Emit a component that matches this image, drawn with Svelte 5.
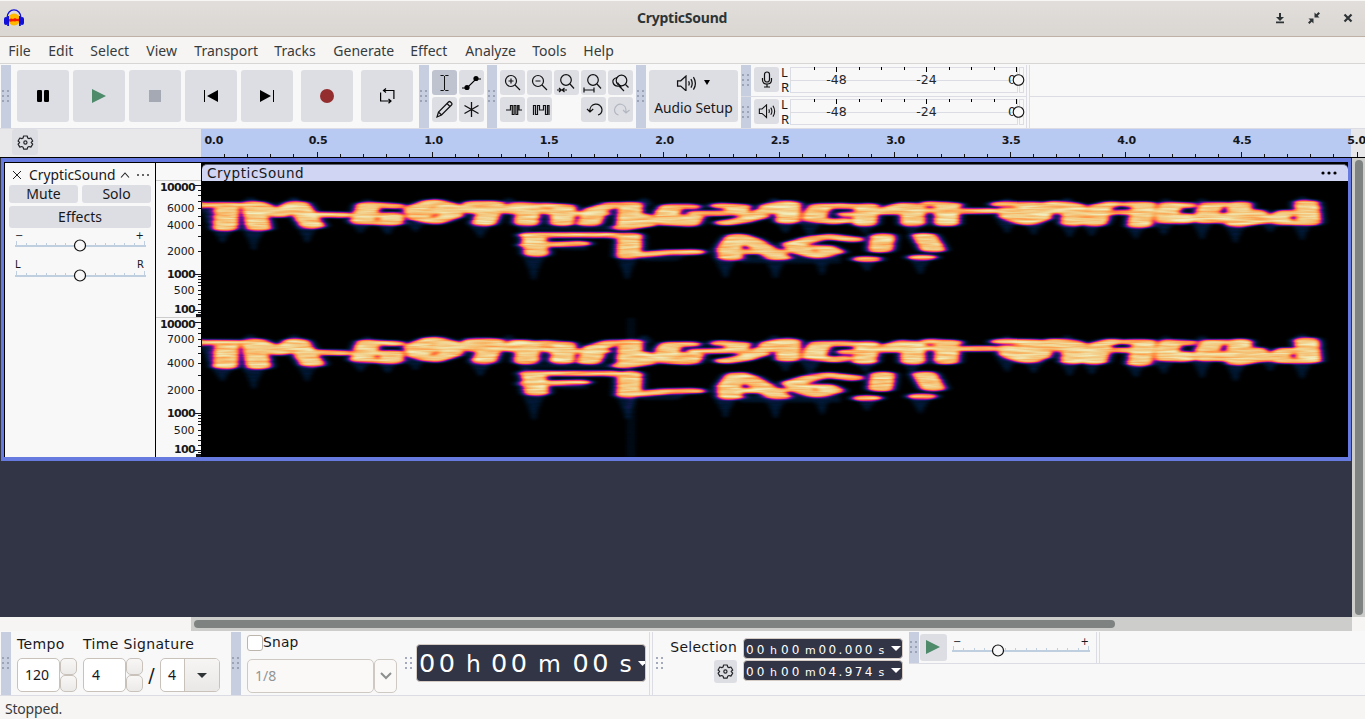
<script>
  const menus = [
    ['File', 8], ['Edit', 48], ['Select', 90], ['View', 146], ['Transport', 194], ['Tracks', 274],
    ['Generate', 333], ['Effect', 410], ['Analyze', 465], ['Tools', 532], ['Help', 583]
  ];
  const menuItems = menus.map(([name, x], i) => ({ name, w: (menus[i + 1]?.[1] ?? x + 60) - x }));

  const ticks = Array.from({ length: 50 }, (_, i) => i + 1);
  const seconds = ['0.5', '1.0', '1.5', '2.0', '2.5', '3.0', '3.5', '4.0', '4.5', '5.0'];

  const freq = [
    { t: '10000', y: 187, b: 1 }, { t: '6000', y: 208 }, { t: '4000', y: 225 }, { t: '2000', y: 251 },
    { t: '1000', y: 274, b: 1 }, { t: '500', y: 290 }, { t: '100', y: 309, b: 1 },
    { t: '10000', y: 324, b: 1 }, { t: '7000', y: 339 }, { t: '4000', y: 363 }, { t: '2000', y: 390 },
    { t: '1000', y: 413, b: 1 }, { t: '500', y: 430 }, { t: '100', y: 449, b: 1 }
  ];
  const longTicks = [185, 274, 310, 322, 413, 450];
  const shortTicks = [
    190, 195, 201, 208, 216, 225, 236, 251, 276, 279, 282, 285, 290, 294, 299, 304, 312, 314,
    328, 333, 339, 346, 353, 363, 375, 390, 415, 418, 421, 424, 430, 435, 440, 445, 452, 454
  ];

  // Energy ridges of the signal: x,y pairs in thirds of a pixel.
  const ridges = [
    [-40, 75, 110, 75], [80, 77, 74, 145],
    [158, 72, 175, 145], [165, 72, 235, 102, 285, 72], [175, 80, 235, 104, 290, 82], [290, 72, 336, 138], [320, 103, 425, 105],
    [578, 78, 505, 74, 485, 125, 572, 129, 575, 105, 495, 107],
    [700, 66, 755, 80, 750, 108, 700, 124, 655, 113, 645, 85, 700, 66], [665, 103, 742, 82],
    [870, 70, 825, 70, 805, 92, 855, 96], [878, 72, 850, 130],
    [920, 92, 960, 74, 985, 76, 977, 130], [920, 93, 975, 97],
    [1030, 76, 1090, 80, 1085, 130], [1015, 90, 1080, 100],
    [1165, 131, 1185, 90, 1235, 75, 1275, 75], [1110, 100, 1195, 100],
    [1290, 73, 1285, 138], [1270, 142, 1330, 133, 1355, 118, 1315, 108],
    [1465, 80, 1415, 80, 1400, 98, 1395, 128, 1460, 132, 1474, 112, 1410, 109], [1495, 100, 1570, 99],
    [1565, 77, 1615, 80, 1605, 97, 1672, 108, 1620, 122, 1578, 128],
    [1705, 95, 1715, 78, 1760, 70], [1765, 72, 1762, 123], [1690, 95, 1765, 95],
    [1930, 78, 1862, 78, 1845, 100, 1840, 118, 1900, 125, 1925, 122], [1920, 78, 1990, 80], [1945, 103, 1990, 103],
    [2000, 78, 1992, 131], [2060, 90, 2110, 76, 2140, 80], [2137, 77, 2137, 131], [2030, 97, 2130, 96],
    [2240, 75, 2238, 131], [2195, 72, 2250, 75], [2160, 91, 2240, 92], [2260, 93, 2370, 93],
    [2405, 72, 2500, 73], [2425, 90, 2435, 112, 2480, 127, 2515, 115, 2520, 90, 2470, 77], [2450, 105, 2505, 85], [2440, 100, 2510, 112],
    [2562, 71, 2610, 75, 2622, 90], [2545, 78, 2562, 93, 2620, 97], [2625, 80, 2617, 130],
    [2682, 131, 2700, 80, 2735, 72], [2655, 98, 2720, 98],
    [2790, 73, 2832, 73, 2817, 136], [2770, 97, 2830, 97],
    [2955, 76, 2912, 74, 2900, 95, 2900, 122, 2945, 124, 2950, 108],
    [3070, 74, 3035, 74, 3022, 95, 3017, 122, 3070, 122, 3075, 106],
    [3118, 72, 3112, 131], [3115, 98, 3160, 96, 3175, 110, 3160, 125, 3115, 133],
    [3318, 68, 3325, 128], [3300, 98, 3260, 98, 3225, 114, 3255, 128, 3320, 128], [3165, 124, 3240, 120],
    [1000, 167, 1008, 222], [990, 165, 1220, 165, 1262, 168], [990, 195, 1134, 191],
    [1288, 166, 1285, 226], [1283, 228, 1400, 217, 1478, 216],
    [1612, 170, 1585, 205, 1590, 234], [1615, 170, 1645, 180, 1700, 212, 1735, 233], [1600, 215, 1735, 215],
    [1955, 178, 1885, 170, 1840, 176, 1780, 193, 1800, 213, 1850, 227, 1895, 215, 1870, 203, 1815, 203],
    [2047, 168, 2040, 210], [1992, 237, 2008, 237],
    [2172, 167, 2198, 209], [2158, 232, 2172, 232]
  ];
  // Faint leakage below the loudest columns: x, y, length.
  const tails = [
    [66, 148, 40], [160, 148, 62], [320, 138, 50], [480, 130, 30], [562, 130, 34], [645, 125, 30], [840, 135, 38],
    [976, 132, 32], [1000, 225, 75], [1280, 228, 70], [1575, 238, 55], [1725, 235, 60], [1755, 125, 34], [1865, 225, 60],
    [1830, 125, 50], [1995, 135, 26], [2000, 240, 34], [2135, 132, 34], [2160, 236, 46], [2420, 120, 40], [2500, 128, 36],
    [2608, 130, 42], [2674, 130, 38], [2806, 136, 40], [2890, 126, 40], [3005, 122, 56], [3105, 132, 56], [3210, 125, 32],
    [3305, 128, 52], [25, 70, 60]
  ];
  const peaks = [[-5, 70], [150, 60], [280, 60], [500, 66], [925, 62], [1330, 62], [1720, 62], [2420, 64], [2600, 62], [2895, 64], [3005, 64], [3305, 58]];

  const toPoints = (r) => {
    let s = '';
    for (let i = 0; i < r.length; i += 2) s += `${r[i] / 5.6},${r[i + 1]} `;
    return s;
  };
  const lines = ridges.map(toPoints);
  const channels = [
    { k: 'a', m: 'translate(-1.5 -1) scale(.33333)' },
    { k: 'b', m: 'translate(-1.5 135.9) scale(.33333 .3425)' }
  ];
  const meterTicks = Array.from({ length: 10 }, (_, i) => 24 + i * 22.45);
</script>

{#snippet grip(plain, h)}
  <div class="grip" class:plain style:height="{h}px">
    <svg width="8" height="14" viewBox="0 0 8 14" shape-rendering="crispEdges">
      {#each [0, 5, 10] as y}<rect x="0" {y} width="2" height="2" /><rect x="5" {y} width="2" height="2" />{/each}
    </svg>
  </div>
{/snippet}

{#snippet gear()}
  <svg width="17" height="17" viewBox="0 0 17 17" fill="none" stroke="#25262b" stroke-width="1.2" stroke-linejoin="round">
    <path d="M6.600 2h3.600l.5 2 1.300.6 1.900-.6 1.800 3-1.500 1.500 1.500 1.600-1.800 3-1.900-.6-1.300.7-.5 1.900H6.600l-.5-1.900-1.300-.7-2 .6-1.700-3 1.500-1.600L1.100 7l1.700-3 2 .6 1.300-.6z" />
    <circle cx="8.400" cy="8.500" r="1.600" />
  </svg>
{/snippet}

{#snippet speaker(w)}
  <svg width={w} height={w * 0.8} viewBox="0 0 20 16" fill="none" stroke="#111" stroke-width="1.200">
    <path d="M1.500 5.500h3L9.500 1v14L4.500 10.500h-3z" /><path d="M12 6q1.200 2 0 4M14.200 4q2.500 4 0 8M16.600 2q3.800 6 0 12" />
  </svg>
{/snippet}

{#snippet slider(w, pos)}
  <svg class="slider" width={w} height="16" viewBox="0 0 {w} 16">
    <g fill="#c0cfdf" shape-rendering="crispEdges">
      <rect x="0" y="8" width={w} height="2" />
      {#each Array(14) as _, i}<rect x={1 + Math.round((i * (w - 3)) / 13)} y={i === 0 || i === 13 ? 4 : 6} width="1" height="4" />{/each}
    </g>
    <circle cx={pos} cy="8.500" r="5.500" fill="#f8f8f8" stroke="#111" stroke-width="1.200" />
  </svg>
{/snippet}

<main>
  <header>
    <svg class="logo" width="20" height="18" viewBox="0 0 20 18">
      <circle cx="10" cy="10.500" r="6" fill="#ffb800" /><path d="M4.500 10.500 7 9.500l2 .5 2-1 2 1 2.500-.5v3L13 12l-2 .6-2-.4-2.500.6-2-.5z" fill="#f21a00" />
      <path d="M3 9C3-1.800 17-1.800 17 9" fill="none" stroke="#1010d8" stroke-width="1.300" />
      <rect x="0" y="8" width="4" height="8" rx="2" fill="#1010d8" /><rect x="3.200" y="7" width="1.800" height="10" fill="#1010d8" />
      <rect x="16" y="8" width="4" height="8" rx="2" fill="#1010d8" /><rect x="15" y="7" width="1.800" height="10" fill="#1010d8" />
    </svg>
    <h1>CrypticSound</h1>
    <div class="wm">
      <svg width="10" height="12" viewBox="0 0 10 12"><path d="M4 1h2v4h3L5 9 1 5h3zM1 9.500h8v1.800H1z" fill="#2e3436" /></svg>
      <svg width="14" height="14" viewBox="0 0 14 14"><path d="M7.500 6.500V1.500L9.300 3.300 11.500 1 13 2.500 10.700 4.700 12.500 6.500zM6.500 7.500v5L4.700 10.700 2.500 13 1 11.500 3.300 9.300 1.500 7.500z" fill="#2e3436" /></svg>
      <svg width="10" height="10" viewBox="0 0 10 10"><path d="m1.500 1.500 7 7m0-7-7 7" stroke="#2e3436" stroke-width="2.200" /></svg>
    </div>
  </header>

  <nav>{#each menuItems as m}<span style:width="{m.w}px">{m.name}</span>{/each}</nav>

  <section class="dock top">
    {@render grip(false, 63)}
    <div class="transport">
      <button><svg width="12" height="12"><rect width="5" height="12" rx="1.200" /><rect x="7" width="5" height="12" rx="1.200" /></svg></button>
      <button><svg width="14" height="14"><path d="M0 0v14L14 7z" fill="#4d8b6b" /></svg></button>
      <button><svg width="12" height="12"><rect width="12" height="12" fill="#a5a9b3" /></svg></button>
      <button><svg width="14" height="12"><path d="M0 0h1v12H0zM14 0v12L3 6z" /></svg></button>
      <button><svg width="14" height="12"><path d="M13 0h1v12h-1zM0 0v12l11-6z" /></svg></button>
      <button class="sp"><svg width="14" height="14"><circle cx="7" cy="7" r="7" fill="#942e2e" /></svg></button>
      <button class="sp"><svg width="15" height="16" viewBox="0 0 15 16" fill="none" stroke="#000" stroke-width="1.200"><path d="M3.500 2.500h10.400v8.500M6 .5l-2.500 2L6 4.500M11 13H.600V4.500M8.500 11l2.500 2-2.500 2.300" /></svg></button>
    </div>
    {@render grip(false, 63)}
    <div class="grid two">
      <button class="on"><svg width="25" height="25" fill="none" stroke="#111"><path d="M8.500 5.500h3l1 1 1-1h3M12.500 6v14M8.500 20.500h3l1-1 1 1h3" /></svg></button>
      <button><svg width="25" height="25"><path d="M3 18h5L17 9h5" fill="none" stroke="#000" stroke-width="1.200" /><circle cx="8" cy="17.500" r="2.600" /><circle cx="17" cy="8.500" r="2.600" /></svg></button>
      <button><svg width="25" height="25" fill="none" stroke="#111" stroke-width="1.200"><path d="m5 20 1.500-5L16.500 5q1-1 2 0l1 1q1 1 0 2L9.500 18zM15 6.500l3 3M6.500 15l3 3" /></svg></button>
      <button><svg width="25" height="25" stroke="#111" stroke-width="1.300"><path d="M12.500 5v15M5.500 8.500l14 8M19.500 8.500l-14 8" /></svg></button>
    </div>
    {@render grip(false, 63)}
    <div class="grid five">
      {#each ['in', 'out', 'sel', 'fit', 'tog'] as z}
        <button><svg width="25" height="25" fill="none" stroke="#111" stroke-width="1.200">
          {#if z === 'in' || z === 'out'}
            <circle cx="11" cy="11" r="5.500" /><path d="m15 15 5 5M8.500 11h5" />{#if z === 'in'}<path d="M11 8.500v5" />{/if}
          {:else if z === 'tog'}
            <circle cx="13.500" cy="10.500" r="5.300" /><path d="m17.500 14.500 3 3M9 7.500Q4 9 5 12.500q1 4 6 3.500l5 5M9.500 12.500l4 5" />
          {:else}
            <circle cx="12" cy="10" r="5.300" /><path d="m16 14 4 4.500" />
            {#if z === 'sel'}<path d="M3 20h4M8 20h5M5 18l2.300 2L5 22M10.500 18l-2.300 2 2.300 2" />{:else}<path d="M3 20h10M3 17.500v5M13 17.500v5" />{/if}
          {/if}
        </svg></button>
      {/each}
      <button><svg width="25" height="25" fill="none" stroke="#111" stroke-width="1.200"><path d="M6 13h4.500V8.500h1.800v9h1.800v-9h1.800v9h1.800v-9h1.300V13h3" /></svg></button>
      <button><svg width="25" height="25" fill="none" stroke="#111" stroke-width="1.200"><path d="M6.500 18V8.500h2v9h2v-9h2V13h4V8.500h2v9h2v-9h1.500V18" /></svg></button>
      <i></i>
      <button><svg width="25" height="25" fill="none" stroke="#111" stroke-width="1.200"><path d="M9 14.500c-1-9 11-10 12-2 0 3-2 5-4 5.500M6 12l3 3 3.200-3" /></svg></button>
      <button><svg width="25" height="25" fill="none" stroke="#b3b7c0" stroke-width="1.200"><path d="M18 15.500c1-10-10-11-11.500-3 0 3 2 5 4 5.500M15 13l3 3 3.500-3" /></svg></button>
    </div>
    {@render grip(false, 63)}
    <button class="audio">
      <span>{@render speaker(21)}<svg width="6" height="5"><path d="M0 0h6L3 5z" /></svg></span>
      Audio Setup
    </button>
    <div class="meters">
      {#each [0, 1] as row}
        <div class="mrow">
          {@render grip(false, 31)}
          <button>
            {#if row === 0}<svg width="16" height="17" fill="none" stroke="#111" stroke-width="1.200"><rect x="5.500" y="1" width="5" height="10" rx="2.500" /><path d="M3.500 7v2q0 4 4.500 4t4.500-4V7M8 13v3M5 16h6" /></svg>
            {:else}{@render speaker(18)}{/if}
          </button>
          <div class="lr"><span>L</span><span>R</span></div>
          <svg width="235" height="27" font-family="DejaVu Sans" font-size="12.500" fill="#25272b">
            <g fill="none" stroke="#dcdde4" shape-rendering="crispEdges"><path d="M.5.5h227v25H.5zM.5 13h227M229.500.5h4v25h-4z" /></g>
            {#each meterTicks as x, i}<rect x={Math.round(x)} y="0" width="1" height={i % 4 === 1 || i === 9 ? 5 : 3} fill="#000" />{/each}
            <text x="46.500" y="16.500" text-anchor="middle">-48</text><text x="136.500" y="16.500" text-anchor="middle">-24</text><text x="222" y="16.500" text-anchor="middle">0</text>
            <circle cx="228.500" cy="13" r="5.300" fill="#f8f8f8" stroke="#111" stroke-width="1.100" />
          </svg>
        </div>
      {/each}
    </div>
    <div class="rest"><i></i><i></i></div>
  </section>

  <section class="ruler">
    <div class="gearbox"><button>{@render gear()}</button></div>
    <svg width="1164" height="28" font-family="DejaVu Sans" font-weight="bold" font-size="11" fill="#15161a">
      <rect width="1150" height="28" fill="#b8c9f2" />
      <text x="3.500" y="15" letter-spacing="-.3">0.0</text>
      {#each ticks as n}<rect x={Math.round(n * 23.11)} y={n % 5 ? 25 : 23} width="1" height="5" />{/each}
      {#each seconds as s, i}<text x={(i + 1) * 115.5 + (i === 9 ? 0.5 : 1.5)} y="15" text-anchor="middle" letter-spacing="-.3">{s}</text>{/each}
    </svg>
  </section>

  <section class="project">
    <div class="tracks">
      <article>
        <div class="panel">
          <div class="name">
            <svg width="10" height="10"><path d="m1 1 8 8m0-8-8 8" stroke="#222" /></svg><b>CrypticSound</b>
            <svg width="10" height="6"><path d="m1 5.500 4-4.500 4 4.500" fill="none" stroke="#222" stroke-width="1.100" /></svg>
            <svg width="12" height="2"><path d="M0 0h2v2H0zM5 0h2v2H5zM10 0h2v2h-2z" fill="#666" /></svg>
          </div>
          <div class="ms"><button>Mute</button><button>Solo</button></div>
          <button class="fx">Effects</button>
          <div class="ends"><span>−</span><span>+</span></div>
          {@render slider(131, 65)}
          <div class="ends lo"><span>L</span><span>R</span></div>
          {@render slider(131, 65)}
        </div>
        <svg class="vruler" width="45" height="294" viewBox="156 163 45 294" font-family="DejaVu Sans" font-size="11" fill="#17181c">
          <path d="M156 180.500h45M156 317.500h45" stroke="#ccc" />
          {#each freq as f}<text x={f.b ? 195 : 194.500} y={f.y + 4} text-anchor="end" font-weight={f.b ? 'bold' : 'normal'} letter-spacing={f.b ? -0.65 : -0.1}>{f.t}</text>{/each}
          {#each longTicks as y}<rect x="195" {y} width="6" height="1" />{/each}
          {#each shortTicks as y}<rect x="198" {y} width="3" height="1" />{/each}
          <path d="M196 314h5v3h-5zM196 454h5v3h-5z" />
        </svg>
        <div class="clip">
          <div class="cliphead"><span>CrypticSound</span><svg width="16" height="4"><circle cx="2" cy="2" r="1.600" /><circle cx="8" cy="2" r="1.600" /><circle cx="14" cy="2" r="1.600" /></svg></div>
          <svg class="spectrum" width="1146" height="276" viewBox="0 0 1146 276">
            <defs>
              <filter id="heat" filterUnits="userSpaceOnUse" x="0" y="0" width="1146" height="276" color-interpolation-filters="sRGB">
                <feGaussianBlur in="SourceGraphic" stdDeviation="2.4 .85" result="e" />
                <feTurbulence type="fractalNoise" baseFrequency=".03 .4" numOctaves="2" seed="7" />
                <feColorMatrix values=".5 0 0 0 .62  .5 0 0 0 .62  .5 0 0 0 .62  0 0 0 0 1" result="n" />
                <feComposite in="e" in2="n" operator="arithmetic" k1="1" />
                <feComponentTransfer>
                  <feFuncR type="table" tableValues="0 0 .14 .42 .72 .94 1 1 .97 .95 .95" />
                  <feFuncG type="table" tableValues="0 .09 .11 .06 .09 .25 .46 .6 .73 .83 .93" />
                  <feFuncB type="table" tableValues="0 .19 .42 .58 .58 .42 .25 .29 .42 .57 .75" />
                </feComponentTransfer>
              </filter>
              <g id="signal">
                <g fill="#fff" opacity=".12">
                  {#each tails as [x, y, l]}<path d="M{x - 34} {y}h68l-22 {l * 0.6}-8 {l * 0.4}h-8l-10-{l * 0.4}z" />{/each}
                  {#each peaks as [x, y]}<path d="M{x - 32} {y + 12}l24-20h16l24 20z" />{/each}
                  <path d="M955 150h320v-12h-300zM1320 226h140l-30 16h-110zM1600 228h320v22h-300zM1050 200h110v10h-80z" opacity=".8" />
                </g>
                <g transform="scale(5.6 1)" fill="none" stroke="#fff" stroke-linecap="round" stroke-linejoin="round">
                  <g stroke-width="19" opacity=".17">{#each lines as p}<polyline points={p} />{/each}</g>
                  <g stroke-width="12.900">{#each lines as p}<polyline points={p} />{/each}</g>
                </g>
              </g>
            </defs>
            <g filter="url(#heat)">
              <rect width="1146" height="276" />
              <rect x="425" y="137" width="8" height="139" fill="#0f0f0f" />
              {#each channels as c (c.k)}<use href="#signal" transform={c.m} />{/each}
            </g>
          </svg>
        </div>
      </article>
    </div>
    <div class="vscroll"><i></i></div>
  </section>

  <section class="hscroll"><div><i></i></div></section>

  <section class="dock bottom">
    {@render grip(false, 63)}
    <div class="tempo">
      <div class="labels"><span>Tempo</span><span>Time Signature</span></div>
      <div class="fields">
        <div class="field">120</div><div class="spin"><i></i><i></i></div>
        <div class="field second">4</div><div class="spin"><i></i><i></i></div>
        <span class="slash">/</span>
        <div class="combo"><span>4</span><i><svg width="10" height="5"><path d="M0 0h10L5 5z" fill="#2e3436" /></svg></i></div>
      </div>
    </div>
    {@render grip(false, 63)}
    <div class="snap">
      <div class="check"><i></i>Snap</div>
      <div class="off"><span>1/8</span><i><svg width="12" height="8"><path d="m1 1 5 5 5-5" fill="none" stroke="#8b8f8e" stroke-width="2" /></svg></i></div>
    </div>
    {@render grip(true, 63)}
    <div class="clock">
      <span>00</span><small>h</small><span>00</span><small>m</small><span>00</span><small>s</small>
      <svg width="7" height="5"><path d="M0 0h9L4.500 5z" fill="#fff" /></svg>
    </div>
    <div class="seam"></div>
    {@render grip(true, 63)}
    <div class="sellabel"><span>Selection</span><button>{@render gear()}</button></div>
    <div class="times">
      {#each ['00.000', '04.974'] as t}
        <div><span>00</span><small>h</small><span>00</span><small>m</small><span>{t}</span><small>s</small><svg width="10" height="5"><path d="M0 0h10L5 5z" fill="#fff" /></svg></div>
      {/each}
    </div>
    <div class="speed">
      {@render grip(false, 31)}
      <button><svg width="14" height="14"><path d="M0 0v14L14 7z" fill="#4d8b6b" /></svg></button>
      <div class="spslide"><div class="ends"><span>−</span><span>+</span></div>{@render slider(138, 46)}</div>
      <div class="seam last"></div>
    </div>
  </section>

  <footer>Stopped.</footer>
</main>

<style>
  :global(body) { margin: 0; overflow: hidden; }
  main { width: 1365px; height: 719px; display: flex; flex-direction: column; overflow: hidden; background: #f6f5f3; font-family: 'Noto Sans', sans-serif; color: #17181c; }
  main :global(*) { box-sizing: border-box; }
  svg { display: block; flex: none; }
  button { border: 0; padding: 0; margin: 0; background: #dddee4; border-radius: 3px; display: flex; align-items: center; justify-content: center; font: inherit; color: inherit; }

  header { height: 37px; flex: none; display: flex; align-items: center; background: linear-gradient(#e1dedb, #dad6d2); border-top: 1px solid #f7f6f5; border-bottom: 1px solid #beb2a7; padding: 0 12px 2px 4px; }
  .logo { margin-right: 613px; }
  h1 { margin: 0; font-size: 14px; line-height: 20px; font-weight: 700; color: #2e3436; width: 91px; letter-spacing: -.25px; white-space: nowrap; }
  .wm { margin-left: auto; display: flex; align-items: center; gap: 21.500px; }
  .wm svg:nth-child(2) { margin-right: 1px; }

  nav { height: 27px; flex: none; display: flex; padding-left: 8.300px; border-bottom: 1px solid #d8d6d4; font-size: 14px; line-height: 27px; color: #363c3e; }
  nav span { white-space: nowrap; }

  .dock { display: flex; flex: none; background: #f8f8f8; padding-left: 1px; }
  .top { height: 65px; padding-top: 1px; border-bottom: 1px solid #dcdde4; }
  .grip { width: 10px; flex: none; background: #c6cee0; display: flex; align-items: center; justify-content: center; fill: #9ba3b7; }
  .grip.plain { background: none; fill: #a5a9bd; padding-left: 2px; }
  .transport { display: flex; gap: 4px; padding: 5px 6px 0; }
  .transport button { width: 52px; height: 52px; }
  .transport .sp { margin-left: 4px; }
  .grid { display: grid; gap: 2px; grid-auto-rows: 25px; padding: 5px 3px 0; }
  .two { grid-template-columns: repeat(2, 25px); }
  .five { grid-template-columns: repeat(5, 25px); }
  .grid .on { background: #bfc2cf; }
  .audio { width: 89px; height: 52px; margin: 5px 3px 0; flex-direction: column; font-size: 13.800px; line-height: 20px; gap: 7px; padding-top: 1px; white-space: nowrap; }
  .audio span { display: flex; align-items: center; gap: 7px; margin-left: -1px; }
  .meters { width: 286px; border-right: 1px solid #dcdde4; }
  .mrow { display: flex; height: 32px; border-bottom: 1px solid #dcdde4; }
  .mrow button { width: 25px; height: 25px; margin: 2px 2px 0 3px; }
  .mrow > svg { margin-top: 2px; }
  .lr { width: 9px; font-size: 13px; line-height: 15px; }
  .lr span { display: block; }
  .rest { flex: 1; margin-left: 2px; border-left: 1px solid #dcdde4; }
  .rest i { display: block; height: 32px; border-bottom: 1px solid #dcdde4; }

  .ruler { height: 29px; flex: none; display: flex; background: #e8e8ea; border-bottom: 1px solid #000; }
  .gearbox { width: 201px; padding-left: 12px; }
  .gearbox button { width: 26px; height: 26px; }

  .project { height: 459px; flex: none; display: flex; background: #323546; }
  .tracks { width: 1352px; }
  article { display: flex; height: 303px; margin-left: 1px; width: 1350px; border: 3px solid #667adf; border-top-width: 4px; border-bottom-width: 4px; border-right-width: 3px; background: #000; padding: 1px 0 0 1px; }
  .panel { width: 150px; height: 294px; background: #f8f8f8; padding: 4px 4px 0; margin-right: 1px; display: flex; flex-direction: column; font-size: 14px; }
  .name { display: flex; align-items: center; height: 15px; padding: 0 2px 0 3px; }
  .name b { font-weight: 400; font-size: 13.800px; width: 91px; margin-left: 7px; margin-right: 0; white-space: nowrap; line-height: 15px; }
  .name svg:last-child { margin-left: 7px; }
  .ms { display: flex; gap: 4px; margin-top: 3px; }
  .ms button { width: 69px; height: 18px; padding-bottom: 1px; }
  .fx { width: 142px; height: 22px; margin-top: 3px; padding-bottom: 1px; }
  .ends { display: flex; justify-content: space-between; font: 10px/12px 'DejaVu Sans', sans-serif; padding: 0 7px 0 6px; height: 9px; margin-top: 2px; }
  .lo { margin-top: 6px; }
  .panel .slider { margin-left: 6px; margin-top: -2px; }
  .panel .lo + :global(.slider) { margin-top: -1px; }
  .vruler { background: #f8f8f8; }
  .clip { margin-left: 1px; width: 1146px; }
  .cliphead { display: flex; align-items: center; justify-content: space-between; height: 17px; margin-top: 1px; border-top: 1px solid #5b5f70; background: #cfd5f2; border-radius: 5px 5px 0 0; padding: 0 11px 0 5px; font: 13.500px/16px 'DejaVu Sans', sans-serif; }
  .cliphead span { letter-spacing: .55px; }
  .spectrum { background: #000; }
  .vscroll { width: 13px; background: #cdcdcc; padding: 2px 2px 2px 3px; }
  .vscroll i { display: block; height: 455px; background: #7e8381; border-radius: 4px; }

  .hscroll { height: 14px; flex: none; padding-left: 191px; }
  .hscroll div { width: 1161px; height: 14px; background: #cdcdcc; padding: 3px; }
  .hscroll i { display: block; width: 921px; height: 8px; border-radius: 4px; background: #7e8381; }

  .bottom { height: 65px; padding-top: 1px; border-bottom: 1px solid #dcdde4; font-family: 'DejaVu Sans', sans-serif; font-size: 14px; }
  .tempo { width: 220px; padding-left: 6px; }
  .labels { display: flex; height: 26px; line-height: 24px; letter-spacing: .35px; }
  .labels span:first-child { width: 66px; }
  .labels span { white-space: nowrap; }
  .fields { display: flex; align-items: center; height: 34px; font-family: 'Noto Sans', sans-serif; }
  .field { width: 43px; height: 34px; border: 1px solid #c8c2bb; border-radius: 5px; background: #fff; line-height: 32px; padding-left: 7px; }
  .second { margin-left: 6px; padding-left: 8px; }
  .spin { width: 17px; display: flex; flex-direction: column; }
  .spin i { height: 17px; border: 1px solid #c8c2bb; border-radius: 5px; background: linear-gradient(#f8f7f6, #eceae8); }
  .slash { width: 17px; text-align: center; font: 19px 'DejaVu Sans', sans-serif; }
  .combo { width: 60px; height: 34px; display: flex; border: 1px solid #c8c2bb; border-radius: 5px; background: #fff; overflow: hidden; line-height: 32px; }
  .combo span { width: 23px; padding-left: 7px; }
  .combo i { flex: 1; border-left: 1px solid #c8c2bb; background: linear-gradient(#f6f5f4, #eae8e6); display: flex; align-items: center; justify-content: center; }
  .snap { width: 162px; padding: 3px 6px 0; }
  .check { display: flex; height: 24px; line-height: 14px; font-size: 13.800px; letter-spacing: .2px; }
  .check i { width: 16px; height: 16px; border: 1px solid #bcb5ae; border-radius: 3px; background: #fff; }
  .off { display: flex; color: #929595; font-family: 'Noto Sans', sans-serif; line-height: 32px; }
  .off span, .off i { height: 34px; border: 1px solid #cfc9c3; border-radius: 5px; background: #faf9f8; }
  .off span { width: 127px; padding-left: 7px; }
  .off i { width: 23px; display: flex; align-items: center; justify-content: center; }
  .clock { width: 230px; height: 38px; margin: 12px 0 0 3px; border: 1px solid #d6ccc6; border-radius: 4px; background: #323546; color: #fff; display: flex; align-items: baseline; overflow: hidden; padding: 0 0 0 2px; font-size: 25.500px; line-height: 37px; }
  .clock span { width: 47px; flex: none; letter-spacing: 3.600px; white-space: nowrap; }
  .clock small { font-size: 23.500px; width: 25px; flex: none; }
  .clock small:nth-of-type(2) { width: 34.500px; }
  .clock small:nth-of-type(3) { width: 13px; }
  .clock svg { align-self: center; margin-left: 5px; }
  .seam { width: 4px; height: 63px; margin-left: 3px; border: solid #dcdde4; border-width: 0 1px; margin-right: 1px; }
  .sellabel { display: flex; flex-direction: column; align-items: flex-end; width: 73px; padding-top: 7px; font-size: 13.900px; line-height: 17px; letter-spacing: .3px; }
  .sellabel button { width: 23px; height: 23px; margin-top: 4px; }
  .times { width: 160px; margin-left: 6px; padding-top: 6px; display: flex; flex-direction: column; gap: 1px; }
  .times div { height: 21px; border: 1px solid #d6ccc6; border-radius: 4px; background: #323546; color: #fff; display: flex; align-items: baseline; padding-left: 2px; font-size: 12px; line-height: 22px; }
  .times span { letter-spacing: 3.100px; width: 24px; flex: none; white-space: nowrap; }
  .times small { font-size: 11px; width: 11px; flex: none; }
  .times small:nth-of-type(2) { width: 13.500px; }
  .times span:nth-of-type(3) { width: 60px; letter-spacing: 2.400px; }
  .times small:nth-of-type(3) { width: 11px; }
  .times svg { align-self: center; margin-left: 1px; }
  .speed { flex: 1; height: 32px; margin-left: 6px; display: flex; border-bottom: 1px solid #dcdde4; }
  .speed button { width: 27px; height: 27px; margin: 2px 5px 0 1px; padding: 0 1px 1px 0; }
  .spslide { width: 138px; padding-top: 4px; }
  .spslide .ends { padding: 0 1px; margin: 0; }
  .spslide .slider { margin-top: -3px; }
  .last { height: 31px; margin-left: 6px; }
  footer { height: 23px; line-height: 25px; padding-left: 5px; font-size: 14px; color: #363c3e; letter-spacing: -.2px; }
</style>
